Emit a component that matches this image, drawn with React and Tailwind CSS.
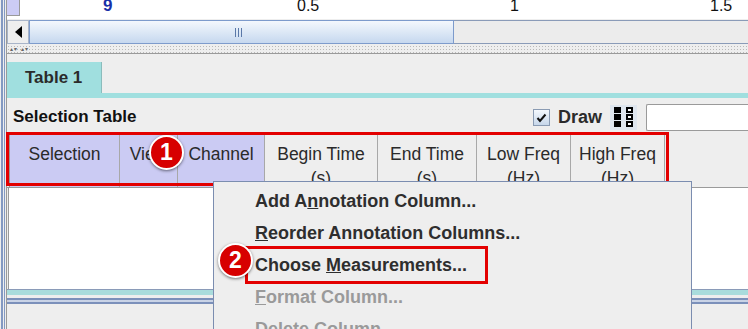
import React from 'react';

const Badge = ({ n, className }) => (
  <div
    className={`absolute w-[35px] h-[35px] rounded-full bg-[#d70000] border-2 border-white shadow-[0_1px_3px_rgba(0,0,0,0.5)] flex items-center justify-center text-white font-bold text-[23px] leading-none ${className}`}
  >
    {n}
  </div>
);

const HeaderCell = ({ w, lav, top, bottom }) => (
  <div
    className={`${w} h-full shrink-0 border-r border-[#a8a8a8] flex flex-col items-center pt-[7px] leading-[24px] text-[17.5px] text-[#2a2a2a] ${lav ? 'bg-[#cbcbf3]' : 'bg-[#eeeeee]'}`}
  >
    <span>{top}</span>
    {bottom && <span>{bottom}</span>}
  </div>
);

const MenuItem = ({ children, disabled }) => (
  <div className={`h-[32px] flex items-center pl-[41px] text-[18px] font-bold whitespace-pre ${disabled ? 'text-[#9a9a9a]' : 'text-[#2e2e2e]'}`}>
    {children}
  </div>
);

export default function App() {
  return (
    <div className="w-[748px] h-[329px] relative overflow-hidden bg-[#eeeeee] flex font-['Liberation_Sans',Arial,sans-serif]">
      {/* left edge lines */}
      <div className="w-[7px] shrink-0 flex">
        <div className="w-[1px]" />
        <div className="w-[2px] bg-[#8399c2]" />
        <div className="w-[1px]" />
        <div className="w-[1px] bg-[#8399c2]" />
        <div className="w-[1px]" />
        <div className="w-[1px] bg-[#9a9a9a]" />
      </div>

      <div className="flex-1 flex flex-col min-w-0">
        {/* ruler */}
        <div className="h-[19px] bg-white relative shrink-0">
          <div className="absolute left-0 top-0 w-[13px] h-[16px] bg-[#ccccf5] border-r border-b border-[#9a9a9a]" />
          <span className="absolute left-[96px] top-[-3px] text-[17px] font-bold text-[#1a2fa8] leading-none">9</span>
          <span className="absolute left-[290px] top-[-2px] text-[16px] text-[#111] leading-none">0.5</span>
          <span className="absolute left-[503px] top-[-2px] text-[16px] text-[#111] leading-none">1</span>
          <span className="absolute left-[703px] top-[-2px] text-[16px] text-[#111] leading-none">1.5</span>
        </div>

        {/* scrollbar */}
        <div className="h-[24px] flex shrink-0 mt-[1px]">
          <div className="w-[22px] h-full bg-[#eeeeee] border border-[#a8b4c8] flex items-center justify-center">
            <div className="w-0 h-0 border-y-[6px] border-y-transparent border-r-[7px] border-r-black" />
          </div>
          <div className="w-[425px] h-full border border-[#7d9bcc] bg-gradient-to-b from-[#f4f8fd] to-[#c6d8ef] flex items-center justify-center">
            <div className="flex gap-[2px] ml-[-6px]">
              <div className="w-[1px] h-[9px] bg-[#5a78a8]" />
              <div className="w-[1px] h-[9px] bg-[#5a78a8]" />
              <div className="w-[1px] h-[9px] bg-[#5a78a8]" />
            </div>
          </div>
          <div className="flex-1 h-full bg-[#ececec] border-y border-[#8a9bb8]" />
        </div>

        {/* split divider */}
        <div className="h-[9px] mt-[1px] shrink-0 border-b border-[#9a9a9a] flex items-center bg-[radial-gradient(#b9b9b9_0.7px,transparent_0.8px)] bg-[length:3px_3px]">
          <span className="ml-[3px] text-[6px] leading-none text-[#666] tracking-[1px]">▴▾ ▴▾</span>
        </div>

        {/* tab strip */}
        <div className="h-[39px] shrink-0 flex items-end">
          <div className="w-[95px] h-[31px] bg-[#a0dfdf] border-r border-[#8bbcbc] flex items-center pl-[18px] text-[17px] font-bold text-[#2b2b2b]">
            Table 1
          </div>
        </div>
        <div className="h-[5px] bg-[#a0dfdf] shrink-0" />

        {/* panel */}
        <div className="flex-1 flex flex-col relative">
          <div className="h-[35px] shrink-0 flex items-center pl-[6px]">
            <span className="text-[17px] font-bold text-[#111] mt-[3px]">Selection Table</span>
            <div className="ml-auto flex items-center mt-[3px]">
              <div className="w-[17px] h-[17px] border border-[#8a9bb3] bg-gradient-to-b from-[#f4f8fd] to-[#c7d7ea] flex items-center justify-center">
                <svg width="11" height="11" viewBox="0 0 11 11">
                  <path d="M1.5 6 L4 9 L9.5 2.5" fill="none" stroke="#111" strokeWidth="2" />
                </svg>
              </div>
              <span className="ml-[8px] text-[18px] font-bold text-[#2b2b2b]">Draw</span>
              <div className="ml-[8px] h-[25px] w-[27px] bg-[#dfe6ee] flex items-center justify-center gap-[5px]">
                <div className="flex flex-col gap-[1px]">
                  <div className="w-[7px] h-[6px] bg-black" />
                  <div className="w-[7px] h-[6px] bg-black" />
                  <div className="w-[7px] h-[6px] bg-black" />
                </div>
                <div className="flex flex-col gap-[1px]">
                  <div className="w-[7px] h-[6px] border-2 border-black bg-white" />
                  <div className="w-[7px] h-[6px] border-2 border-black bg-white" />
                  <div className="w-[7px] h-[6px] border-2 border-black bg-white" />
                </div>
              </div>
              <div className="ml-[9px] w-[102px] h-[27px] bg-white border border-[#9a9a9a] border-r-0 rounded-l-[2px]" />
            </div>
          </div>

          {/* header row */}
          <div className="h-[55px] shrink-0 flex pl-[2px] pt-[2px] border-b border-[#9a9a9a]">
            <div className="flex h-full overflow-hidden border-l border-[#9a9a9a]">
              <HeaderCell w="w-[110px]" lav top="Selection" />
              <HeaderCell w="w-[58px]" lav top="View" />
              <HeaderCell w="w-[87px]" lav top="Channel" />
              <HeaderCell w="w-[113px]" top="Begin Time" bottom="(s)" />
              <HeaderCell w="w-[99px]" top="End Time" bottom="(s)" />
              <HeaderCell w="w-[94px]" top="Low Freq" bottom="(Hz)" />
              <HeaderCell w="w-[94px]" top="High Freq" bottom="(Hz)" />
            </div>
          </div>

          {/* table body */}
          <div className="h-[101px] shrink-0 bg-white ml-[1px] border-l border-[#9a9a9a]" />
          <div className="h-[6px] shrink-0 bg-[#a9dcdc] border-t border-[#8a9bb8]" />
          <div className="h-[3px] shrink-0" />
          <div className="h-[6px] shrink-0 border-y-2 border-[#7b90ba] bg-[#c9d3e6]" />

          {/* annotation 1 */}
          <div className="absolute left-[-1px] top-[34px] w-[663px] h-[54px] border-[3px] border-[#e30000]" />
          <Badge n="1" className="left-[142px] top-[37px]" />
        </div>
      </div>

      {/* context menu */}
      <div className="absolute left-[213px] top-[181px] w-[479px] h-[160px] bg-[#eeeeee] border border-[#7b8db0] pt-[3px]">
        <MenuItem>
          {'Add A'}<u>n</u>{'notation Column...'}
        </MenuItem>
        <MenuItem>
          <u>R</u>{'eorder Annotation Columns...'}
        </MenuItem>
        <MenuItem>
          {'Choose '}<u>M</u>{'easurements...'}
        </MenuItem>
        <MenuItem disabled>
          <u>F</u>{'ormat Column...'}
        </MenuItem>
        <MenuItem disabled>
          <u>D</u>{'elete Column'}
        </MenuItem>
      </div>

      {/* annotation 2 */}
      <div className="absolute left-[245px] top-[246px] w-[243px] h-[38px] border-[3px] border-[#e30000]" />
      <Badge n="2" className="left-[218px] top-[243px]" />
    </div>
  );
}
